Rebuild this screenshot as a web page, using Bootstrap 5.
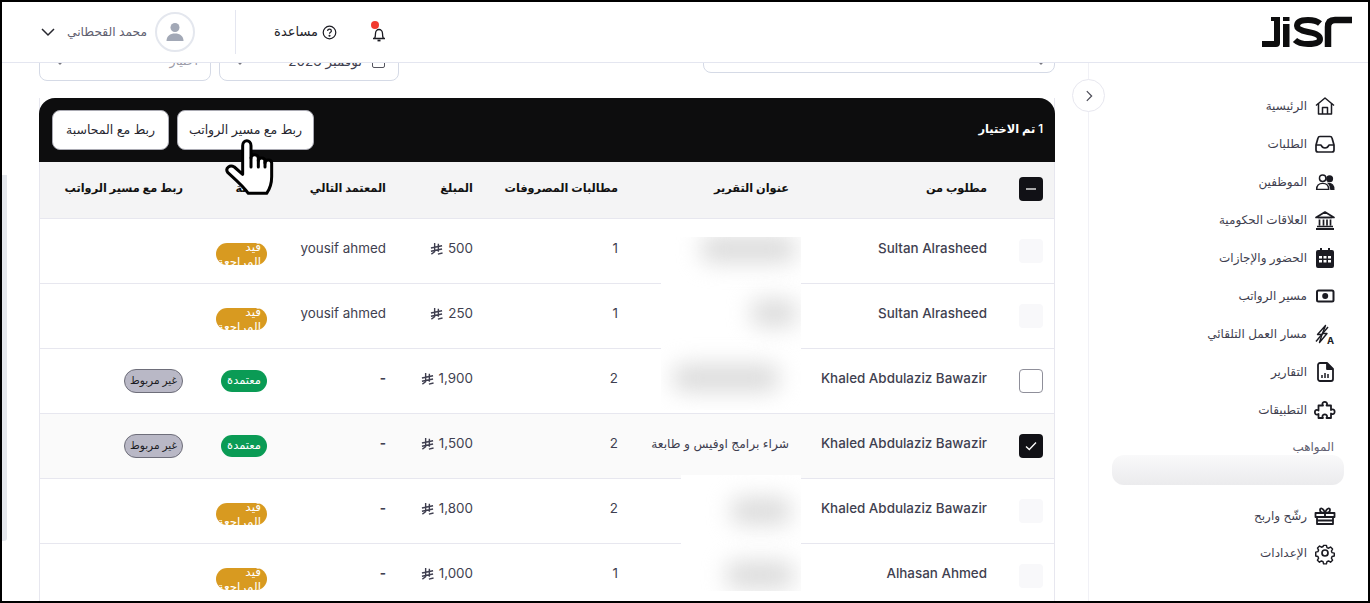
<!DOCTYPE html>
<html lang="ar" dir="rtl">
<head>
    <meta charset="UTF-8">
    <meta name="viewport" content="width=device-width, initial-scale=1.0">
    <title>JISR</title>
    <link href="https://cdn.jsdelivr.net/npm/bootstrap@5.3.0/dist/css/bootstrap.min.css" rel="stylesheet">
    <style>
        html, body { height: 100%; overflow: hidden; }
        body { font-family: "Inter", "Noto Sans", "DejaVu Sans", sans-serif; font-size: 13px; color: #3f3f50; background: #fff; }
        .app-frame { height: 603px; border: 2px solid #000; overflow: hidden; }

        .top-bar { height: 61px; border-bottom: 1px solid #e4e6f0; padding: 0 16px 0 38px; background: #fff; flex: none; position: relative; z-index: 3; }
        .brand-logo { width: 90px; height: 34px; }
        .top-tools { gap: 34px; }
        .help-link { color: #1f1f2b; font-size: 13px; gap: 4px; }
        .bell-wrap { width: 16px; height: 16px; }
        .bell-dot { position: absolute; top: -3px; right: 8px; width: 8px; height: 8px; border-radius: 50%; background: #f23a2f; }
        .head-divider { width: 1px; height: 44px; background: #e4e6f0; margin: 0 38px 0 40px; }
        .user-pic { width: 40px; height: 40px; border: 2px solid #e4e7ee; border-radius: 50%; }
        .user-name { color: #5f6070; font-size: 12.25px; margin: 0 8px 0 11px; }

        .side-nav { width: 280px; flex: none; border-left: 1px solid #f1f1f6; padding-top: 24px; position: relative; }
        .nav-row { height: 38px; padding-right: 31px; gap: 6px; color: #3f3f50; font-size: 12px; }
        .nav-row svg { width: 24px; height: 24px; flex: none; }
        .nav-title { margin: 9px 34px 0 0; height: 17px; line-height: 17px; color: #5f6070; font-size: 12px; }
        .nav-hidden { height: 30px; margin: 0 24px 12px 23px; border-radius: 12px; background: linear-gradient(#f9f9fa, #ebebed); }
        .nav-last { margin-top: -1px; }
        .side-toggle { position: absolute; top: 16px; left: -17px; width: 33px; height: 33px; border: 1px solid #e7e7ef; border-radius: 50%; background: #fff; z-index: 2; }

        .main-pane { min-width: 0; flex: 1; padding: 0 33px 0 37px; position: relative; overflow: hidden; }
        .side-scroll { position: absolute; left: 0; top: 112px; width: 5px; height: 366px; background: #e4e7ec; border-radius: 0 0 3px 0; }
        .filter-row { margin-top: -22px; height: 39px; }
        .filter-box { border: 1px solid #d5dae6; border-radius: 8px; background: #fff; font-size: 13.5px; color: #3f3f50; padding: 0 12px; flex: none; }
        .filter-wide { width: 352px; height: 32px; padding-right: 5px; }
        .filter-date { width: 180px; height: 40px; margin-right: auto; margin-left: 8px; }
        .filter-pick { width: 172px; height: 40px; color: #9a9aa6; font-size: 12.5px; }
        .date-check { width: 13px; height: 13px; border: 1.5px solid #55555f; border-radius: 2px; margin-right: 1px; margin-left: 10px; }
        .filter-caret { align-self: flex-start; margin-top: 12px; }
        .filter-date .filter-caret, .filter-pick .filter-caret { margin-right: auto; }

        .table-shell { margin-top: 18px; position: relative; border-left: 1px solid #e7e7ef; border-right: 1px solid #e7e7ef; }
        .select-bar { height: 64px; background: #0d0d0e; border-radius: 16px 16px 0 0; color: #fff; font-weight: 600; font-size: 11.4px; padding: 0 12px 0 13px; margin: 0 -1px; }
        .bar-btn { height: 40px; background: #fff; color: #27272f; border: 1px solid #a9a9b2; border-radius: 8px; font-size: 12.5px; padding: 0; white-space: nowrap; }
        .btn-payroll { width: 137px; }
        .btn-accounting { width: 117px; }
        .bar-btns { gap: 8px; }
        .req-table { table-layout: fixed; width: 100%; margin: 0; --bs-table-border-color: #e7e7ef; }
        .req-table th { height: 56px; background: #f4f4f5; color: #111; font-size: 11.3px; font-weight: 600; vertical-align: middle; padding: 0 12px 2px; white-space: nowrap; }
        .req-table td { height: 65px; vertical-align: middle; padding: 0 12px 5px; font-size: 13.4px; color: #3f3f50; background: transparent; }
        .req-table td.cell-mid { padding-bottom: 0; }
        .req-table td.cell-low { padding: 6px 12px 0; }
        .req-table td.name-cell { font-weight: 500; }
        .req-table .row-picked td { background: #fafafa; }
        .req-table th:first-child, .req-table td:first-child { padding-right: 11px; }
        .w-check { width: 55px; }
        .w-name { width: 198px; }
        .w-title { width: 171px; }
        .w-count { width: 145px; }
        .w-amount { width: 87px; }
        .w-next { width: 119px; }
        .w-state { width: 84px; }
        .tick-box { width: 24px; height: 24px; border-radius: 4px; display: flex; align-items: center; justify-content: center; }
        .tick-off { background: #f8f8fa; }
        .tick-open { background: #fff; border: 1px solid #8f8f9a; }
        .tick-on { background: #111116; }
        .pill-wait { display: block; width: 51px; height: 22px; overflow: hidden; border-radius: 11px; background: #d89a20; color: #fff; font-size: 12px; font-weight: 500; line-height: 15px; padding: 0 6px; white-space: normal; }
        .pill-words { display: block; margin-top: -4px; }
        .pill-ok { display: inline-block; height: 22px; line-height: 21px; border-radius: 11px; background: #0a9b55; color: #fff; font-size: 11.5px; font-weight: 500; padding: 0 6px; }
        .pill-none { display: inline-block; width: 59px; height: 24px; line-height: 21px; text-align: center; border-radius: 12px; background: #b9b8c6; border: 1px solid #6e6e7a; color: #1b1b22; font-size: 10.5px; white-space: nowrap; }
        .riyal { width: 13px; height: 13px; margin: 0 1px 0 0; vertical-align: -2px; }
        .title-text { font-size: 12.25px; white-space: nowrap; }
        .no-next { font-weight: 700; }

        .mask-top, .mask-low { position: absolute; background: #fff; overflow: hidden; z-index: 1; }
        .mask-top { top: 139px; left: 621px; width: 140px; height: 173px; }
        .mask-low { top: 377px; left: 641px; width: 120px; height: 116px; }
        .smear { position: absolute; background: #dcdcdc; filter: blur(11px); border-radius: 10px; }
        .smear-a { left: 40px; top: -2px; width: 95px; height: 28px; }
        .smear-b { left: 90px; top: 62px; width: 46px; height: 28px; }
        .smear-c { left: 12px; top: 127px; width: 106px; height: 28px; }
        .smear-d { left: 50px; top: 22px; width: 60px; height: 28px; }
        .smear-e { left: 45px; top: 86px; width: 68px; height: 28px; }
        .hand-pointer { position: absolute; left: 185px; top: 37px; width: 60px; height: 65px; z-index: 4; }
    </style>
</head>
<body>
    <div class="app-frame d-flex flex-column">
        <!-- Top bar -->
        <header class="top-bar d-flex align-items-center justify-content-between">
            <svg class="brand-logo" viewBox="0 0 90 34" role="img" aria-label="JISR">
                <g fill="#0d0d0e">
                    <path d="M0 26h12V6H9V2h9v26q0 4-4 4H0z"/>
                    <rect x="21" y="2" width="6.500" height="4"/>
                    <rect x="21" y="9" width="6.500" height="23"/>
                </g>
                <path d="M58 8.500Q54 5 46 5Q35 5 35 11Q35 15 46 17Q58 19 58 24Q58 29 46 29Q37 29 33 25" fill="none" stroke="#0d0d0e" stroke-width="6"/>
                <path d="M66 32V12Q66 5 73 5H90" fill="none" stroke="#0d0d0e" stroke-width="6.500"/>
            </svg>
            <div class="d-flex align-items-center">
                <div class="d-flex align-items-center top-tools">
                    <span class="bell-wrap position-relative d-block">
                        <svg viewBox="0 0 16 16" width="16" height="16" fill="none" stroke="#1b1b22" stroke-width="1.300"><path d="M2 12.500h12M3.500 12.500c1-1.500 1-3 1-5 0-2 1.500-4 3.500-4s3.500 2 3.500 4c0 2 0 3.500 1 5"/><path d="M6.500 14.500h3" stroke-width="1.800"/></svg>
                        <span class="bell-dot"></span>
                    </span>
                    <span class="help-link d-flex align-items-center">
                        <svg viewBox="0 0 16 16" width="15" height="15" fill="none" stroke="#1b1b22" stroke-width="1.300"><circle cx="8" cy="8" r="6.700"/><path d="M6 6.300c0-2.600 4-2.600 4 0 0 1.500-2 1.500-2 3"/><circle cx="8" cy="11.500" r=".5" fill="#1b1b22"/></svg>
                        <span>مساعدة</span>
                    </span>
                </div>
                <span class="head-divider"></span>
                <span class="user-pic d-flex align-items-center justify-content-center">
                    <svg viewBox="0 0 24 24" width="24" height="24" fill="#a2a8b6"><circle cx="12" cy="7.500" r="4.500"/><path d="M3.500 21c0-5 3.500-7.500 8.500-7.500s8.500 2.500 8.500 7.500z"/></svg>
                </span>
                <span class="user-name">محمد القحطاني</span>
                <svg viewBox="0 0 16 16" width="16" height="16" fill="none" stroke="#27272f" stroke-width="1.500"><path d="M2 5l6 6 6-6"/></svg>
            </div>
        </header>

        <div class="d-flex flex-grow-1 position-relative">
            <!-- Sidebar -->
            <nav class="side-nav">
                <span class="side-toggle d-flex align-items-center justify-content-center">
                    <svg viewBox="0 0 16 16" width="14" height="14" fill="none" stroke="#4a4a55" stroke-width="1.400"><path d="M5.500 2.500L11 8l-5.500 5.500"/></svg>
                </span>
                <div class="nav-row d-flex align-items-center">
                    <svg viewBox="0 0 24 24" fill="none" stroke="#1b1b22" stroke-width="1.500" stroke-linejoin="round"><path d="M3 11.500L12 4l9 7.500"/><path d="M5.500 9.500V20h13V9.500"/><path d="M9.500 20v-6.500h5V20"/></svg>
                    <span>الرئيسية</span>
                </div>
                <div class="nav-row d-flex align-items-center">
                    <svg viewBox="0 0 24 24" fill="none" stroke="#1b1b22" stroke-width="1.700" stroke-linejoin="round"><path d="M7 4.500h10a2 2 0 0 1 2 1.500l2 7v5a2 2 0 0 1-2 2H5a2 2 0 0 1-2-2v-5l2-7a2 2 0 0 1 2-1.500z"/><path d="M3 13h5c1 2.500 2 3 4 3s3-.5 4-3h5"/></svg>
                    <span>الطلبات</span>
                </div>
                <div class="nav-row d-flex align-items-center">
                    <svg viewBox="-1 -1 26 26" fill="none" stroke="#1b1b22" stroke-width="1.600"><circle cx="9.500" cy="8" r="3.500"/><path d="M3 20c0-4.500 2.500-6.500 6.500-6.500s6.500 2 6.500 6.500z"/><circle cx="17" cy="8.500" r="3" fill="#1b1b22"/><path d="M16 13.500c3.500 0 5.500 2.500 5.500 6.500h-3c0-3-1-5-2.500-6.500z" fill="#1b1b22"/></svg>
                    <span>الموظفين</span>
                </div>
                <div class="nav-row d-flex align-items-center">
                    <svg viewBox="0 0 24 24" fill="none" stroke="#1b1b22" stroke-width="1.700"><path d="M3 9.500L12 4l9 5.500z" stroke-linejoin="round"/><path d="M5 9.500h14M6.500 11.500v6M10.500 11.500v6M14 11.500v6M17.500 11.500v6M4 18.500h16"/><path d="M3 21h18" stroke-width="2"/></svg>
                    <span>العلاقات الحكومية</span>
                </div>
                <div class="nav-row d-flex align-items-center">
                    <svg viewBox="0 0 24 24" fill="#1b1b22"><path d="M7 2h2v3H7zM15 2h2v3h-2z"/><path fill-rule="evenodd" d="M5 4h14a2 2 0 0 1 2 2v14a2 2 0 0 1-2 2H5a2 2 0 0 1-2-2V6a2 2 0 0 1 2-2zM6 10v2.500h3V10zm4.500 0v2.500h3V10zM15 10v2.500h3V10zM6 14v2.500h3V14zm4.500 0v2.500h3V14zM15 14v2.500h3V14z"/></svg>
                    <span>الحضور والإجازات</span>
                </div>
                <div class="nav-row d-flex align-items-center">
                    <svg viewBox="0 0 24 24" fill="none" stroke="#1b1b22" stroke-width="2"><rect x="4" y="6.500" width="16.500" height="11" rx="1.500"/><circle cx="12.200" cy="12" r="3" fill="#1b1b22" stroke="none"/></svg>
                    <span>مسير الرواتب</span>
                </div>
                <div class="nav-row d-flex align-items-center">
                    <svg viewBox="0 0 24 24" fill="none" stroke="#1b1b22" stroke-width="1.400" stroke-linejoin="round"><path d="M12.500 3.500L4.500 12.500h4.500L6.500 20.500l7.500-9h-4.500z"/><path d="M3 19.500L15 5"/><text x="14" y="21.500" font-size="9.500" font-weight="700" fill="#1b1b22" stroke="none" font-family="Inter, sans-serif" direction="ltr">A</text></svg>
                    <span>مسار العمل التلقائي</span>
                </div>
                <div class="nav-row d-flex align-items-center">
                    <svg viewBox="0 0 24 24" fill="none" stroke="#1b1b22" stroke-width="1.800" stroke-linejoin="round"><path d="M7 3h7l6 6v10a2 2 0 0 1-2 2H7a2 2 0 0 1-2-2V5a2 2 0 0 1 2-2z"/><path d="M14 3v6h6" fill="#1b1b22"/><path d="M9 18v-3M12 18v-5M15 18v-4" stroke-width="1.500"/></svg>
                    <span>التقارير</span>
                </div>
                <div class="nav-row d-flex align-items-center">
                    <svg viewBox="0 0 24 24" fill="none" stroke="#1b1b22" stroke-width="1.800" stroke-linejoin="round"><path d="M9.500 6.500C8.500 3 15 3 14 6.500l-.5 1H18v4.500l1-.5c3.500-1 3.500 5.500 0 4.500l-1-.5V20h-4.500l.5-1c1-3.500-5.500-3.500-4.500 0l.5 1H5.500v-4l-1 .5C1 17.500 1 11 4.500 12l1 .5V7.500H10z"/></svg>
                    <span>التطبيقات</span>
                </div>
                <div class="nav-title">المواهب</div>
                <div class="nav-hidden"></div>
                <div class="nav-row d-flex align-items-center">
                    <svg viewBox="0 0 24 24" fill="none" stroke="#1b1b22" stroke-width="1.800" stroke-linejoin="round"><path d="M2.500 9h19v4h-19zM4 13v7h16v-7"/><path d="M12 9V13M4 16.500h16"/><path d="M12 9C9 9 7 8 7 6s3-3 5 3c2-6 5-5 5-3s-2 3-5 3z"/></svg>
                    <span>رشّح واربح</span>
                </div>
                <div class="nav-row nav-last d-flex align-items-center">
                    <svg viewBox="0 0 24 24" fill="none" stroke="#1b1b22" stroke-width="1.700" stroke-linejoin="round"><circle cx="12" cy="12" r="3"/><path d="M10.300 3h3.400l.6 2.600 1.900.8 2.300-1.400 2.400 2.400-1.400 2.300.8 1.900 2.600.6v3.400l-2.600.6-.8 1.900 1.400 2.300-2.400 2.400-2.300-1.400-1.900.8-.6 2.600h-3.400l-.6-2.600-1.900-.8-2.300 1.400-2.400-2.400 1.400-2.300-.8-1.900-2.600-.6V11l2.600-.6.800-1.900L3.200 6.200l2.400-2.400 2.300 1.400 1.900-.8z" transform="translate(1.800 1.800) scale(.85)"/></svg>
                    <span>الإعدادات</span>
                </div>
            </nav>

            <!-- Main content -->
            <main class="main-pane">
                <span class="side-scroll"></span>
                <div class="filter-row d-flex align-items-start">
                    <div class="filter-box filter-wide d-flex">
                        <svg class="filter-caret" viewBox="0 0 16 16" width="16" height="16" fill="none" stroke="#77777f" stroke-width="1.300"><path d="M3 5l5 5 5-5"/></svg>
                    </div>
                    <div class="filter-box filter-date d-flex align-items-center">
                        <span class="date-check"></span>
                        <span>نوفمبر 2023</span>
                        <svg class="filter-caret" viewBox="0 0 16 16" width="16" height="16" fill="none" stroke="#77777f" stroke-width="1.300"><path d="M3 5l5 5 5-5"/></svg>
                    </div>
                    <div class="filter-box filter-pick d-flex align-items-center">
                        <span>اختيار</span>
                        <svg class="filter-caret" viewBox="0 0 16 16" width="16" height="16" fill="none" stroke="#77777f" stroke-width="1.300"><path d="M3 5l5 5 5-5"/></svg>
                    </div>
                </div>

                <div class="table-shell">
                    <div class="select-bar d-flex align-items-center justify-content-between">
                        <span>1 تم الاختيار</span>
                        <div class="bar-btns d-flex">
                            <button type="button" class="btn bar-btn btn-payroll">ربط مع مسير الرواتب</button>
                            <button type="button" class="btn bar-btn btn-accounting">ربط مع المحاسبة</button>
                        </div>
                    </div>
                    <table class="table req-table">
                        <colgroup>
                            <col class="w-check"><col class="w-name"><col class="w-title"><col class="w-count"><col class="w-amount"><col class="w-next"><col class="w-state"><col>
                        </colgroup>
                        <thead>
                            <tr>
                                <th><span class="tick-box tick-on"><svg viewBox="0 0 16 16" width="16" height="16" stroke="#ddd" stroke-width="1.500"><path d="M3 8h10"/></svg></span></th>
                                <th>مطلوب من</th>
                                <th>عنوان التقرير</th>
                                <th>مطالبات المصروفات</th>
                                <th>المبلغ</th>
                                <th>المعتمد التالي</th>
                                <th>الحالة</th>
                                <th>ربط مع مسير الرواتب</th>
                            </tr>
                        </thead>
                        <tbody id="reqRows"></tbody>
                    </table>
                    <div class="mask-top"><span class="smear smear-a"></span><span class="smear smear-b"></span><span class="smear smear-c"></span></div>
                    <div class="mask-low"><span class="smear smear-d"></span><span class="smear smear-e"></span></div>
                    <svg class="hand-pointer" viewBox="0 0 180 195" fill="#fff" stroke="#000" stroke-width="9" stroke-linejoin="round" stroke-linecap="round"><path d="M53 100V32C53 12 78 12 78 32V68C78 56 100 56 100 70V78C100 66 120 66 120 78V84C120 72 140 72 140 84V125C140 150 132 165 125 175H70C52 150 25 128 8 112C0 100 14 88 28 96L53 118z"/><path d="M78 68V96M100 74V96M120 80V96" fill="none"/></svg>
                </div>
            </main>
        </div>
    </div>

    <script>
        const RIYAL = '<svg class="riyal" viewBox="0 0 14 14" fill="none" stroke="#3f3f50" stroke-width="1.500"><path d="M5 1v9.500L1.500 13M9 2v8.500M1 6.500l12-2.500M1 10l12-2.500M8.500 13l5-1.200"/></svg>';
        const rows = [
            { name: 'Sultan Alrasheed', count: 1, amount: '500', next: 'yousif ahmed', state: 'wait', box: 'off' },
            { name: 'Sultan Alrasheed', count: 1, amount: '250', next: 'yousif ahmed', state: 'wait', box: 'off' },
            { name: 'Khaled Abdulaziz Bawazir', count: 2, amount: '1,900', next: '-', state: 'ok', box: 'open', link: true },
            { name: 'Khaled Abdulaziz Bawazir', count: 2, amount: '1,500', next: '-', state: 'ok', box: 'on', link: true, title: 'شراء برامج اوفيس و طابعة' },
            { name: 'Khaled Abdulaziz Bawazir', count: 2, amount: '1,800', next: '-', state: 'wait', box: 'off' },
            { name: 'Alhasan Ahmed', count: 1, amount: '1,000', next: '-', state: 'wait', box: 'off' }
        ];
        const tick = '<svg viewBox="0 0 16 16" width="16" height="16" fill="none" stroke="#fff" stroke-width="1.300"><path d="M3 8.500l3.300 3L13 4.500"/></svg>';
        document.getElementById('reqRows').innerHTML = rows.map(function (r) {
            const state = r.state === 'wait'
                ? '<td class="cell-low"><span class="pill-wait"><span class="pill-words">قيد المراجعة</span></span></td>'
                : '<td class="cell-mid"><span class="pill-ok">معتمدة</span></td>';
            return `<tr class="${r.box === 'on' ? 'row-picked' : ''}">
                <td class="cell-mid"><span class="tick-box tick-${r.box}">${r.box === 'on' ? tick : ''}</span></td>
                <td class="name-cell">${r.name}</td>
                <td><span class="title-text">${r.title || ''}</span></td>
                <td>${r.count}</td>
                <td>${r.amount} ${RIYAL}</td>
                <td class="${r.next === '-' ? 'no-next' : ''}">${r.next}</td>
                ${state}
                <td class="cell-mid">${r.link ? '<span class="pill-none">غير مربوط</span>' : ''}</td>
            </tr>`;
        }).join('');
    </script>
    <script src="https://cdn.jsdelivr.net/npm/bootstrap@5.3.0/dist/js/bootstrap.bundle.min.js"></script>
</body>
</html>
